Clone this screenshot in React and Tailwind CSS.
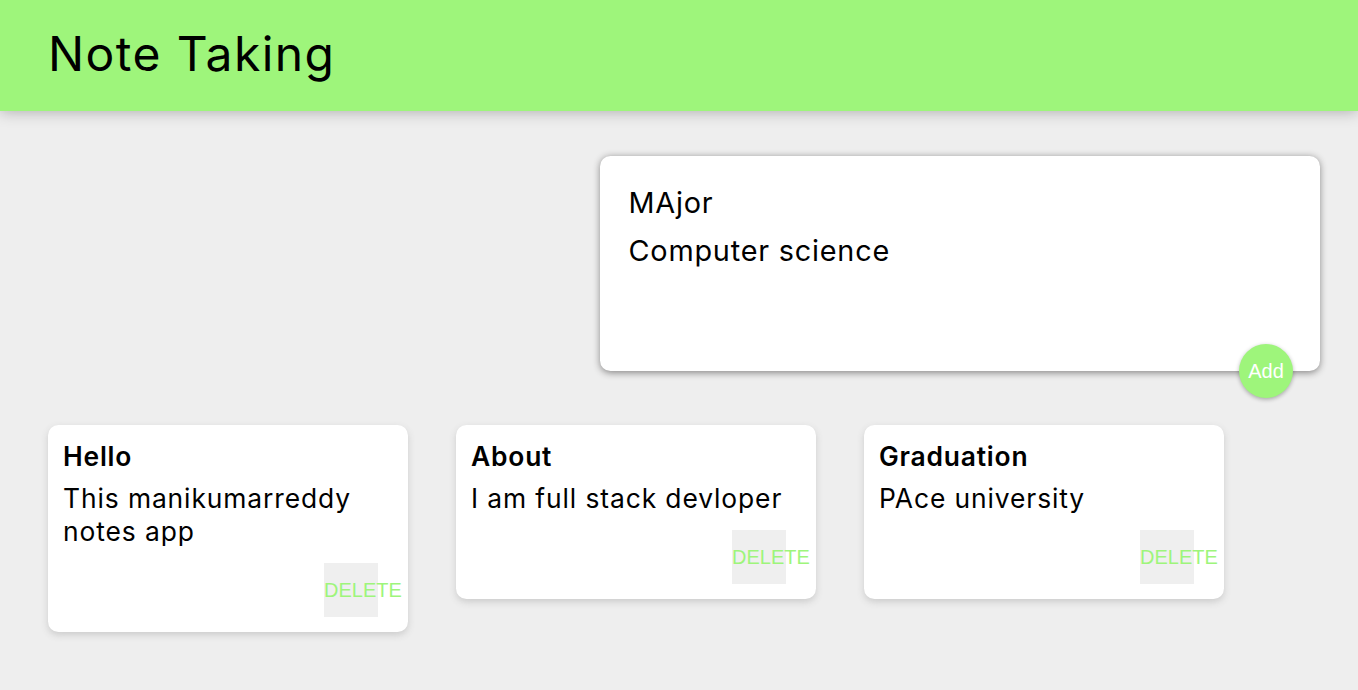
import React from "react";

const notes = [
  { title: "Hello", content: "This manikumarreddy notes app" },
  { title: "About", content: "I am full stack devloper" },
  { title: "Graduation", content: "PAce university" },
];

function Note({ title, content }) {
  return (
    <div className="w-[360px] shrink-0 rounded-[10.5px] bg-white p-[15px] shadow-[0_3px_7.5px_#cccccc] flow-root">
      <h1 className="mb-[10px] text-[26.4px] font-semibold leading-[32px] tracking-[0.8px] text-black">{title}</h1>
      <p className="mb-[15px] text-[26.4px] leading-[33px] tracking-[0.9px] text-black whitespace-pre-wrap">{content}</p>
      <button className="float-right mr-[15px] flex h-[54px] w-[54px] items-center justify-start overflow-visible whitespace-nowrap bg-[#efefef] p-0 text-[20px] text-[#9ef57b] font-['Liberation_Sans',Arial,sans-serif]">
        DELETE
      </button>
    </div>
  );
}

export default function App() {
  return (
    <div className="min-h-[690px] bg-[#eeeeee] font-['Inter',sans-serif]">
      <header className="flex h-[111px] items-center bg-[#9ef57b] px-[48px] shadow-[0_0_15px_0_rgba(0,0,0,0.3)] relative z-10">
        <h1 className="text-[48px] font-normal leading-none tracking-[1.4px] text-black font-['Inter',sans-serif] -mt-[3px]">Note Taking</h1>
      </header>
      <div className="px-[24px]">
        <div className="flex">
          <form className="relative ml-auto mr-[14px] mt-[45px] mb-[30px] w-[720px] rounded-[10.5px] bg-white p-[22.5px] shadow-[0_1.5px_7.5px_rgb(138,137,137)]">
            <input
              readOnly
              value="MAjor"
              className="block w-full border-none p-[6px] text-[28.8px] leading-[35px] tracking-[0.8px] text-black outline-none"
            />
            <textarea
              readOnly
              rows={3}
              value="Computer science"
              className="block h-[123px] w-full resize-none border-none p-[6px] text-[28.8px] leading-[37px] tracking-[0.8px] text-black outline-none"
            />
            <button
              type="button"
              className="absolute right-[27px] bottom-[-27px] flex h-[54px] w-[54px] items-center justify-center rounded-full bg-[#9ef57b] text-[20px] text-white shadow-[0_1.5px_4.5px_rgba(0,0,0,0.3)] font-['Liberation_Sans',Arial,sans-serif]"
            >
              Add
            </button>
          </form>
        </div>
        <div className="flex items-start gap-[48px] px-[24px] pt-[24px]">
          {notes.map((n) => (
            <Note key={n.title} {...n} />
          ))}
        </div>
      </div>
    </div>
  );
}
